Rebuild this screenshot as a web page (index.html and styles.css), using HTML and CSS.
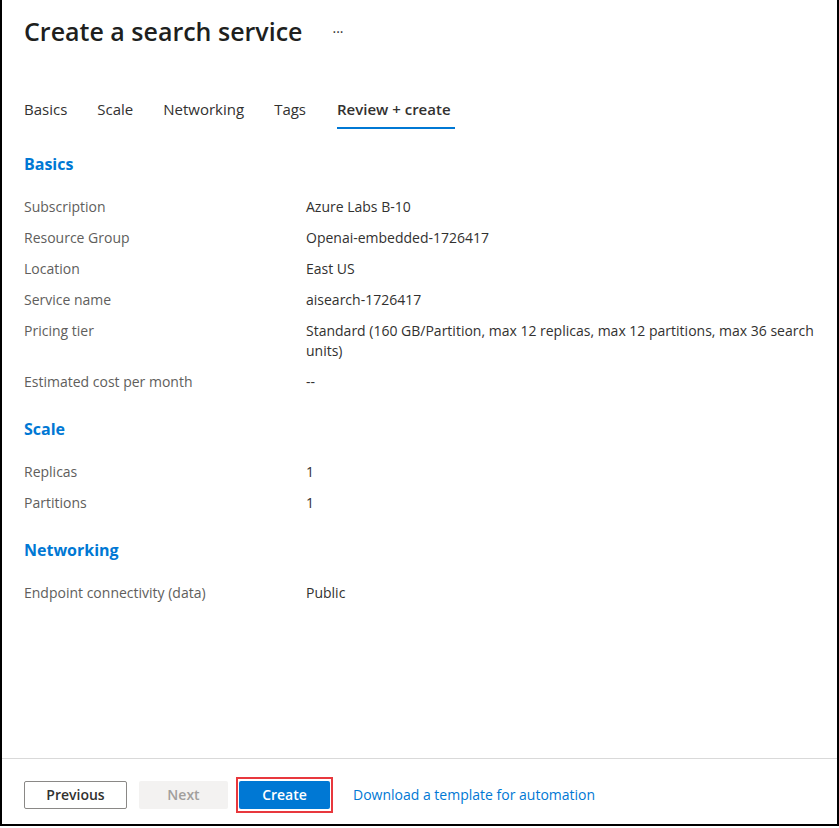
FILE: index.html
```html
<!DOCTYPE html>
<html lang="en">
<head>
<meta charset="utf-8">
<title>Create a search service</title>
<link rel="stylesheet" href="styles.css">
</head>
<body>
<div class="frame">
  <main class="content">
    <header class="title-row">
      <h1 class="title">Create a search service</h1>
      <span class="more">···</span>
    </header>
    <nav class="tabs">
      <span class="tab">Basics</span>
      <span class="tab">Scale</span>
      <span class="tab">Networking</span>
      <span class="tab">Tags</span>
      <span class="tab active">Review + create</span>
    </nav>

    <section class="section first">
      <h2 class="section-title">Basics</h2>
      <dl class="rows">
        <dt>Subscription</dt><dd>Azure Labs B-10</dd>
        <dt>Resource Group</dt><dd>Openai-embedded-1726417</dd>
        <dt>Location</dt><dd>East US</dd>
        <dt>Service name</dt><dd>aisearch-1726417</dd>
        <dt>Pricing tier</dt><dd>Standard (160 GB/Partition, max 12 replicas, max 12 partitions, max 36 search units)</dd>
        <dt>Estimated cost per month</dt><dd>--</dd>
      </dl>
    </section>

    <section class="section">
      <h2 class="section-title">Scale</h2>
      <dl class="rows">
        <dt>Replicas</dt><dd>1</dd>
        <dt>Partitions</dt><dd>1</dd>
      </dl>
    </section>

    <section class="section">
      <h2 class="section-title">Networking</h2>
      <dl class="rows">
        <dt>Endpoint connectivity (data)</dt><dd>Public</dd>
      </dl>
    </section>
  </main>
  <footer class="footer">
    <button class="btn btn-secondary">Previous</button>
    <button class="btn btn-disabled" disabled>Next</button>
    <span class="highlight"><button class="btn btn-primary">Create</button></span>
    <a class="link" href="#">Download a template for automation</a>
  </footer>
</div>
</body>
</html>
```

FILE: styles.css
```css
* { box-sizing: border-box; }
html, body { margin: 0; padding: 0; background: #fff; }
body {
  font-family: "Segoe UI", "Open Sans", "Liberation Sans", sans-serif;
  font-size: 14px;
  color: #323130;
}
.frame {
  width: 839px;
  height: 826px;
  border-left: 2px solid #000;
  border-right: 2px solid #000;
  border-bottom: 2px solid #000;
  display: flex;
  flex-direction: column;
}
.content {
  flex: 1;
  padding-left: 22px;
  padding-right: 20px;
}
.title-row {
  display: flex;
  align-items: center;
  margin-top: 13px;
  height: 36px;
}
.title {
  margin: 0;
  font-size: 25px;
  font-weight: 600;
  line-height: 36px;
  color: #201f1e;
}
.more {
  margin-left: 30px;
  font-size: 14px;
  color: #323130;
}
.tabs {
  display: flex;
  margin-top: 50px;
}
.tab {
  font-size: 15px;
  line-height: 20px;
  padding-bottom: 8px;
  border-bottom: 2px solid transparent;
  margin-right: 30px;
  color: #323130;
}
.tab.active {
  font-weight: 600;
  border-bottom-color: #0078d4;
  padding-right: 4px;
  margin-left: 1px;
}
.section { margin-top: 25px; }
.section.first { margin-top: 23px; }
.section-title {
  margin: 0;
  font-size: 16px;
  line-height: 24px;
  font-weight: 700;
  color: #0078d4;
}
.rows {
  display: grid;
  grid-template-columns: 282px 1fr;
  row-gap: 11px;
  margin: 21px 0 0;
  font-size: 14px;
  line-height: 20px;
}
.rows dt { color: #605e5c; }
.rows dd { margin: 0; color: #323130; }
.footer {
  height: 66px;
  border-top: 1px solid #d9d9d9;
  display: flex;
  align-items: center;
  padding-left: 22px;
  padding-top: 6px;
}
.btn {
  height: 28px;
  font-family: inherit;
  font-size: 14px;
  font-weight: 600;
  border-radius: 2px;
  padding: 0;
  cursor: pointer;
}
.btn-secondary {
  width: 103px;
  background: #fff;
  border: 1px solid #8a8886;
  color: #323130;
}
.btn-disabled {
  width: 89px;
  margin-left: 12px;
  background: #f3f2f1;
  border: none;
  color: #a19f9d;
}
.highlight {
  margin-left: 8px;
  display: inline-flex;
  padding: 2px 1px;
  border: 2px solid #e8383d;
}
.btn-primary {
  width: 91px;
  background: #0078d4;
  border: none;
  color: #fff;
}
.link {
  margin-left: 20px;
  color: #0078d4;
  text-decoration: none;
  font-size: 14px;
}
```
